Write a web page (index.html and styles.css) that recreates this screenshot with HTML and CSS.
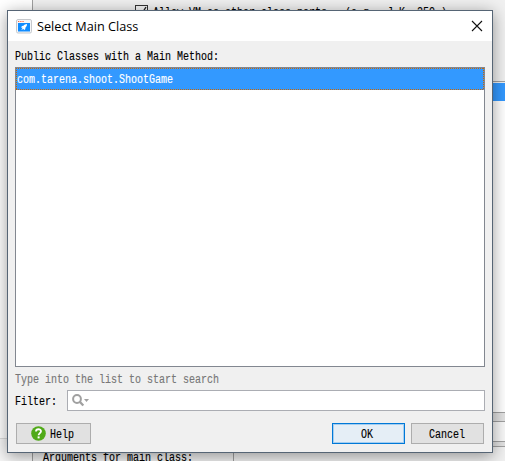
FILE: index.html
```html
<!DOCTYPE html>
<html lang="en">
<head>
<meta charset="utf-8">
<title>Select Main Class</title>
<link rel="stylesheet" href="styles.css">
</head>
<body>
<div class="backdrop">
  <aside class="side"><div class="side-top"></div><div class="side-bottom"></div></aside>
  <section class="main">
    <div class="option"><svg class="check" width="13" height="13" viewBox="0 0 13 13"><rect x=".5" y=".5" width="12" height="12" fill="#f4f4f4" stroke="#333"/><path d="M3 6l3 4 5-8" fill="none" stroke="#222" stroke-width="1.4"/></svg><span class="mono">Allow VM as other class parts   (e.g.  J.K..250.)</span></div>
    <div class="selected"></div>
    <div class="blank"></div>
    <div class="gap"></div>
    <div class="field"></div>
    <div class="strip"></div>
    <div class="args"><div class="args-label"><span class="mono">Arguments for main class:</span></div></div>
  </section>
</div>
<div class="dialog">
  <header class="titlebar">
    <svg class="app-icon" width="16" height="15" viewBox="0 0 16 15"><rect x=".5" y=".5" width="15" height="13.5" rx="1.5" fill="#f4f6f8" stroke="#c5c8cc"/><path d="M2 2.5h1.3M4.2 2.5h1.3M6.4 2.5h1.3" stroke="#ff6b45" stroke-width="1.2"/><rect x="2" y="4" width="12" height="8.500" fill="#108cff"/><path d="M11 5C9.300 5 8.300 5.800 7.500 6.800L6 7.100 5 8.500l1.600.2L5.300 11l2.400-1.300.2 1.500 1.300-1 .3-1.700C10.500 7.500 11 6.800 11 5z" fill="#fff"/></svg>
    <h1>Select Main Class</h1>
    <svg class="close" width="12" height="12" viewBox="0 0 12 12"><path d="M1 1l10 10M11 1L1 11" stroke="#111" stroke-width="1.1"/></svg>
  </header>
  <div class="content">
    <div class="caption"><span class="mono">Public Classes with a Main Method:</span></div>
    <div class="list"><div class="row"><span class="mono">com.tarena.shoot.ShootGame</span></div></div>
    <div class="hint"><span class="mono">Type into the list to start search</span></div>
    <div class="filter">
      <label><span class="mono">Filter:</span></label>
      <div class="search"><svg width="18" height="13" viewBox="0 0 18 13"><circle cx="5" cy="5" r="3.900" fill="none" stroke="#a0a0a0" stroke-width="2"/><path d="M8 8l3.300 3.500" stroke="#a0a0a0" stroke-width="2.300"/><path d="M12 5h5l-2.500 3z" fill="#a0a0a0"/></svg></div>
    </div>
    <div class="actions">
      <div class="button help"><svg width="15" height="15" viewBox="0 0 15 15"><circle cx="7.500" cy="7.500" r="7.300" fill="#50aa18"/><path d="M5 5.500C5 2.500 10 2.600 10 5.300c0 1.700-2.400 1.900-2.400 4" fill="none" stroke="#fff" stroke-width="1.800"/><rect x="6.600" y="10.400" width="2" height="2" fill="#fff"/></svg><span class="mono">Help</span></div>
      <div class="button ok"><span class="mono">OK</span></div>
      <div class="button cancel"><span class="mono">Cancel</span></div>
    </div>
  </div>
</div>
</body>
</html>
```
FILE: styles.css
```css
* { box-sizing: border-box; }
body { margin: 0; width: 505px; height: 461px; overflow: hidden; background: #f0f0f0; color: #000; font: 12px/14px "Liberation Mono", monospace; }
.mono { display: inline-block; white-space: pre; transform: scaleX(.8333); transform-origin: left center; -webkit-text-stroke: .15px currentColor; }
.backdrop { display: flex; height: 461px; }
.side { width: 32px; display: flex; flex-direction: column; }
.side-top { height: 439px; background: #fff; border-bottom: 1px solid #ddd; }
.side-bottom { flex: 1; background: #f7f7f7; }
.main { flex: 1; min-width: 0; display: flex; flex-direction: column; border-left: 1px solid #a0a0a0; background: #f0f0f0; overflow: hidden; }
.option { height: 82px; flex: none; display: flex; gap: 5px; padding: 5px 0 0 102px; border-bottom: 1px solid #a0a0a0; }
.check { flex: none; }
.option .mono { height: 14px; margin-top: 1px; }
.selected { height: 18px; flex: none; margin-top: 1px; background: #3399ff; }
.blank { height: 312px; flex: none; background: #fff; border-bottom: 1px solid #a0a0a0; }
.gap { height: 8px; flex: none; background: #e2e2e2; }
.field { height: 21px; flex: none; background: #f8f8f8; border: solid #a0a0a0; border-width: 1px 0; }
.strip { height: 5px; flex: none; background: #e2e2e2; border-bottom: 1px solid #a0a0a0; }
.args { flex: 1; }
.args-label { width: 201px; height: 20px; padding: 5px 0 0 10px; border-right: 1px solid #a0a0a0; line-height: 12px; }

/* The modal window floats over the page behind it. */
.dialog { position: absolute; left: 7px; top: 10px; width: 486px; height: 443px; background: #f0f0f0; border: 1px solid #566575; box-shadow: 0 3px 15px rgba(0,0,0,.4); }
.titlebar { height: 30px; background: #fff; display: flex; align-items: center; padding: 0 9px 0 8px; }
h1 { margin: 0 0 0 5px; flex: 1; font: 12.7px/20px "Open Sans", sans-serif; }
.content { padding: 0 7px; display: flex; flex-direction: column; }
.caption { height: 26px; padding-top: 9px; }
.list { height: 300px; background: #fff; border: 1px solid #828790; }
.row {
  height: 22px; padding: 5px 0 0 1px; color: #fff; background-color: #3399ff;
  background-image:
    repeating-linear-gradient(90deg, #cc6600 0 1px, transparent 1px 2px),
    repeating-linear-gradient(90deg, #cc6600 0 1px, transparent 1px 2px),
    repeating-linear-gradient(180deg, #cc6600 0 1px, transparent 1px 2px),
    repeating-linear-gradient(180deg, #cc6600 0 1px, transparent 1px 2px);
  background-size: 100% 1px, 100% 1px, 1px 100%, 1px 100%;
  background-position: top, bottom, left, right;
  background-repeat: no-repeat;
}
.hint { height: 23px; padding-top: 6px; color: #777; }
.filter { height: 21px; display: flex; align-items: center; }
label { width: 52px; flex: none; padding-top: 2px; }
.search { flex: 1; height: 21px; background: #fff; border: 1px solid #abadb3; padding: 3px 4px; }
.search svg { display: block; }
.actions { display: flex; margin-top: 12px; padding: 0 1px; }
.button { height: 21px; display: flex; align-items: center; background: #e1e1e1; border: 1px solid #adadad; padding-top: 2px; }
.help { width: 75px; margin-right: auto; gap: 4px; padding: 0 0 0 14px; }
.help .mono { padding-top: 2px; }
.ok { width: 73px; margin-right: 6px; padding-left: 28px; background: #e5eef6; border-color: #0078d7; box-shadow: inset 0 0 0 1px #a5cef0; }
.cancel { width: 73px; padding-left: 17px; }
```
